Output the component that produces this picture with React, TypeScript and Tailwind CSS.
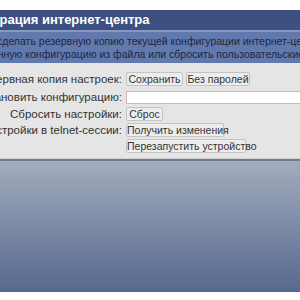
import React from 'react'

const font = { fontFamily: '"Liberation Sans", "DejaVu Sans", sans-serif' }

const Btn = ({ children, w }: { children: React.ReactNode; w: string }) => (
  <button
    className={`h-[14px] ${w} shrink-0 rounded-[2px] border border-[#c4c4c4] bg-[#ededed] px-0 text-[10.5px] leading-[12px] text-[#333] whitespace-nowrap`}
  >
    {children}
  </button>
)

const Row = ({ label, children, className = '' }: { label?: string; children: React.ReactNode; className?: string }) => (
  <div className={`flex items-center ${className}`}>
    <div className="flex w-[126px] shrink-0 justify-end pr-[4px]">
      <span className="whitespace-nowrap text-[11.5px] leading-[14px] text-[#333]">{label}</span>
    </div>
    <div className="flex flex-1 items-center gap-[3px]">{children}</div>
  </div>
)

export default function App() {
  return (
    <div className="h-[300px] w-[300px] overflow-hidden bg-white" style={font}>
      <div className="h-[10px] bg-white" />
      <div className="flex h-[20px] items-center overflow-hidden bg-[#3c5082]">
        <span className="-ml-[56px] whitespace-nowrap text-[13px] font-bold text-white">
          Конфигурация интернет-центра
        </span>
      </div>
      <div className="h-[2px] bg-[#8698c2]" />
      <div className="h-[31px] overflow-hidden bg-[#6279ad] pt-[3px] text-[10.5px] leading-[13px] text-[#1c2744]">
        <div className="-ml-[3px] whitespace-nowrap">сделать резервную копию текущей конфигурации интернет-центра,</div>
        <div className="-ml-[42px] whitespace-nowrap">сохраненную конфигурацию из файла или сбросить пользовательские настройки.</div>
      </div>
      <div className="h-[96px] border-b border-[#cfcfcf] bg-[#e5e5e5] pt-[9px]">
        <Row label="Резервная копия настроек:">
          <Btn w="w-[57px]">Сохранить</Btn>
          <Btn w="w-[64px]">Без паролей</Btn>
        </Row>
        <Row label="Восстановить конфигурацию:" className="mt-[4px]">
          <div className="h-[13px] flex-1 border-y border-l border-[#dcb3b3] bg-white" />
        </Row>
        <Row label="Сбросить настройки:" className="mt-[3px]">
          <Btn w="w-[37px]">Сброс</Btn>
        </Row>
        <Row label="Настройки в telnet-сессии:" className="mt-[2px]">
          <Btn w="w-[98px]">Получить изменения</Btn>
        </Row>
        <Row className="mt-[2px]">
          <Btn w="w-[120px]">Перезапустить устройство</Btn>
        </Row>
      </div>
      <div className="h-[133px] border-t-2 border-[#6f7a93] bg-gradient-to-b from-[#a2acbd] to-[#58698f]" />
      <div className="h-[8px] bg-white" />
    </div>
  )
}
